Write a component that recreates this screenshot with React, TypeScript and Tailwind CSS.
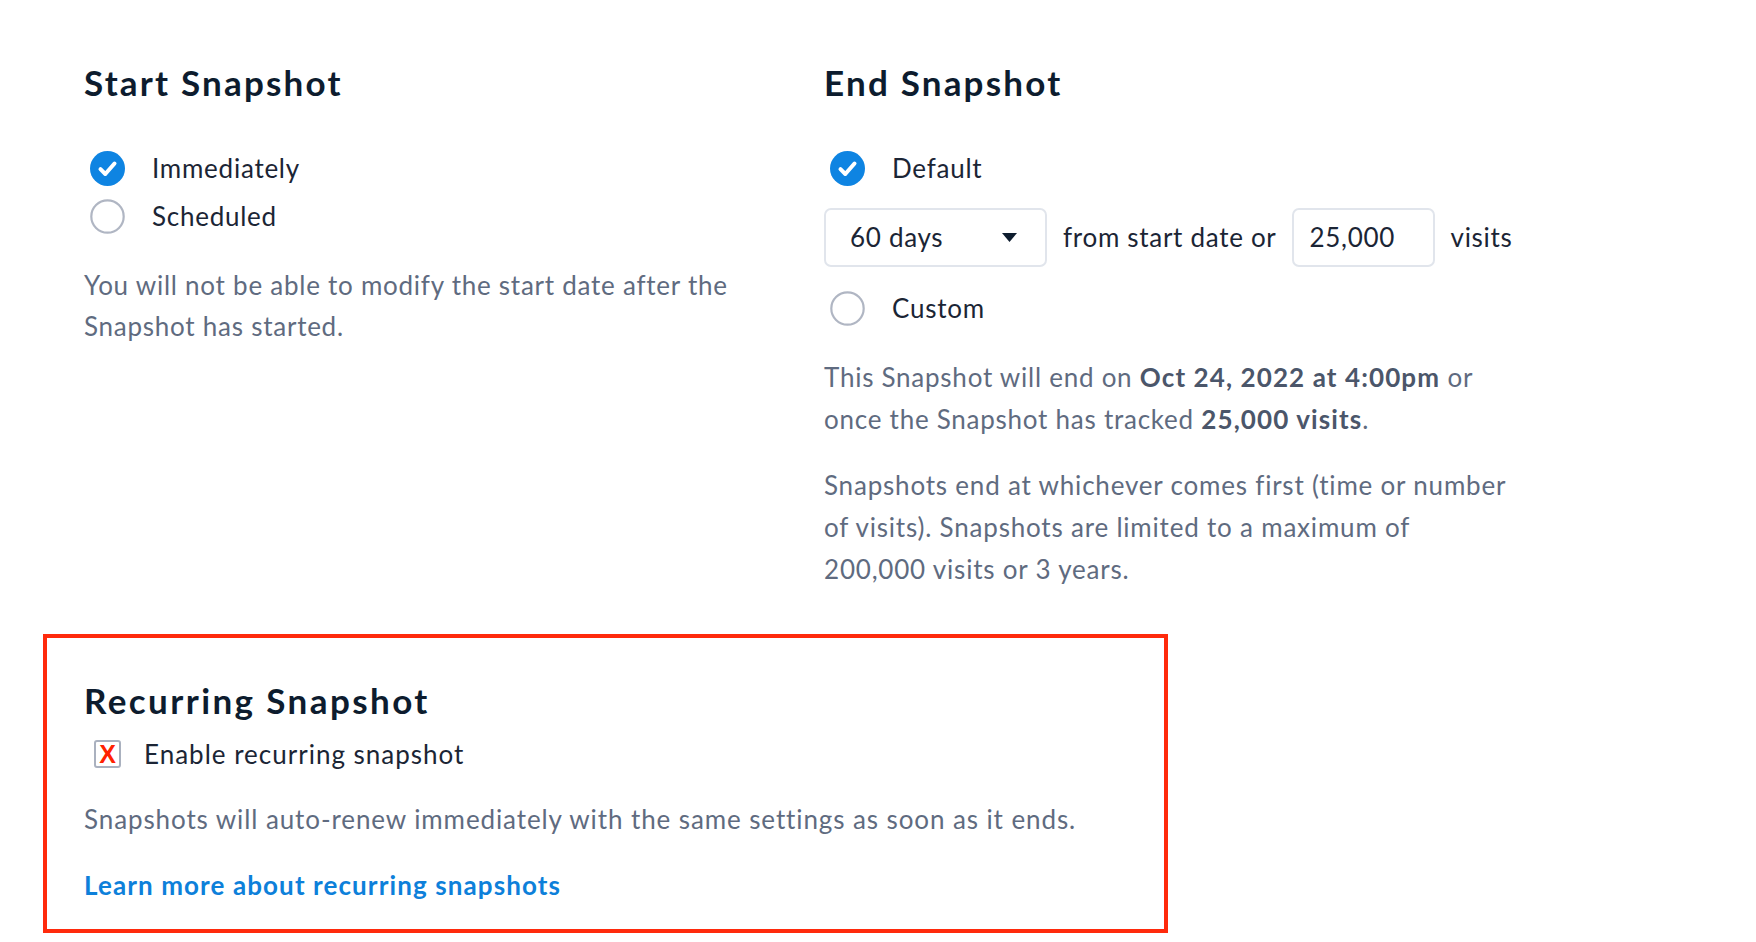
import React from "react";

const font = { fontFamily: "Lato, 'Open Sans', sans-serif" };

function CheckedRadio() {
  return (
    <svg width="35" height="35" viewBox="0 0 35 35" className="shrink-0">
      <circle cx="17.5" cy="17.5" r="17.5" fill="#0e84e2" />
      <path d="M10.5 18.2 L15.3 23 L24.5 12.5" fill="none" stroke="#fff" strokeWidth="4" strokeLinecap="round" strokeLinejoin="round" />
    </svg>
  );
}

function EmptyRadio() {
  return (
    <svg width="35" height="35" viewBox="0 0 35 35" className="shrink-0">
      <circle cx="17.5" cy="17.5" r="16.2" fill="#fff" stroke="#b0b6c3" strokeWidth="2.2" />
    </svg>
  );
}

function RadioRow({ checked, label }: { checked?: boolean; label: string }) {
  return (
    <div className="flex h-12 items-center gap-[27px] pl-[6px]">
      {checked ? <CheckedRadio /> : <EmptyRadio />}
      <span className="text-[26px] tracking-[0.75px] text-[#1b2535]">{label}</span>
    </div>
  );
}

export default function App() {
  return (
    <div className="min-h-[942px] w-full bg-white pt-[62px]" style={font}>
      <div className="grid grid-cols-[740px_1fr] pl-[84px]">
        <div>
          <h2 className="text-[35px] leading-[40px] font-bold tracking-[2.2px] text-[#0d1c2e]">Start Snapshot</h2>
          <div className="mt-[42px]">
            <RadioRow checked label="Immediately" />
            <RadioRow label="Scheduled" />
          </div>
          <p className="mt-[25px] whitespace-nowrap text-[26px] leading-[41px] tracking-[0.75px] text-[#5f6b80]">
            You will not be able to modify the start date after the
            <br />
            Snapshot has started.
          </p>
        </div>
        <div>
          <h2 className="text-[35px] leading-[40px] font-bold tracking-[2.2px] text-[#0d1c2e]">End Snapshot</h2>
          <div className="mt-[42px]">
            <RadioRow checked label="Default" />
          </div>
          <div className="mt-[16px] flex items-center text-[26px] tracking-[0.7px] text-[#1b2535]">
            <div className="flex h-[59px] w-[223px] items-center justify-between rounded-[7px] border-2 border-[#e1e5ec] pl-[24px] pr-[28px]">
              <span>60 days</span>
              <svg width="15" height="9" viewBox="0 0 15 9">
                <path d="M0 0 H15 L7.5 9 Z" fill="#0d1c2e" />
              </svg>
            </div>
            <span className="ml-[16px] whitespace-nowrap">from start date or</span>
            <div className="ml-[15px] flex h-[59px] w-[143px] items-center rounded-[7px] border-2 border-[#e1e5ec] pl-[16px]">
              25,000
            </div>
            <span className="ml-[16px]">visits</span>
          </div>
          <div className="mt-[17px]">
            <RadioRow label="Custom" />
          </div>
          <p className="mt-[24px] whitespace-nowrap text-[26px] leading-[42px] tracking-[0.75px] text-[#5f6b80]">
            This Snapshot will end on <b className="font-bold tracking-[1.1px] text-[#4b566a]">Oct 24, 2022 at 4:00pm</b> or
            <br />
            once the Snapshot has tracked <b className="font-bold tracking-[1.1px] text-[#4b566a]">25,000 visits</b>.
          </p>
          <p className="mt-[24px] whitespace-nowrap text-[26px] leading-[42px] tracking-[0.8px] text-[#5f6b80]">
            Snapshots end at whichever comes first (time or number
            <br />
            of visits). Snapshots are limited to a maximum of
            <br />
            200,000 visits or 3 years.
          </p>
        </div>
      </div>

      <div className="ml-[43px] mt-[44px] w-[1125px] border-4 border-[#ff2a0c] pb-[23px] pl-[37px] pt-[42px]">
        <h2 className="text-[35px] leading-[40px] font-bold tracking-[2.4px] text-[#0d1c2e]">Recurring Snapshot</h2>
        <div className="mt-[14px] flex h-[40px] items-center gap-[23px] pl-[10px]">
          <div className="flex h-[28px] w-[27px] items-center justify-center rounded-[3px] border-2 border-[#aab1bf] bg-white">
            <span
              className="text-[25px] leading-[24px] font-bold text-[#ff2200]"
              style={{ fontFamily: "'Liberation Sans Narrow', 'Liberation Sans', sans-serif" }}
            >
              X
            </span>
          </div>
          <span className="text-[26px] tracking-[1px] text-[#1b2535]">Enable recurring snapshot</span>
        </div>
        <p className="mt-[24px] whitespace-nowrap text-[26px] leading-[42px] tracking-[0.9px] text-[#5f6b80]">
          Snapshots will auto-renew immediately with the same settings as soon as it ends.
        </p>
        <a className="mt-[24px] block text-[26px] leading-[42px] font-bold tracking-[1.1px] text-[#0d80da]" href="#">
          Learn more about recurring snapshots
        </a>
      </div>
    </div>
  );
}
